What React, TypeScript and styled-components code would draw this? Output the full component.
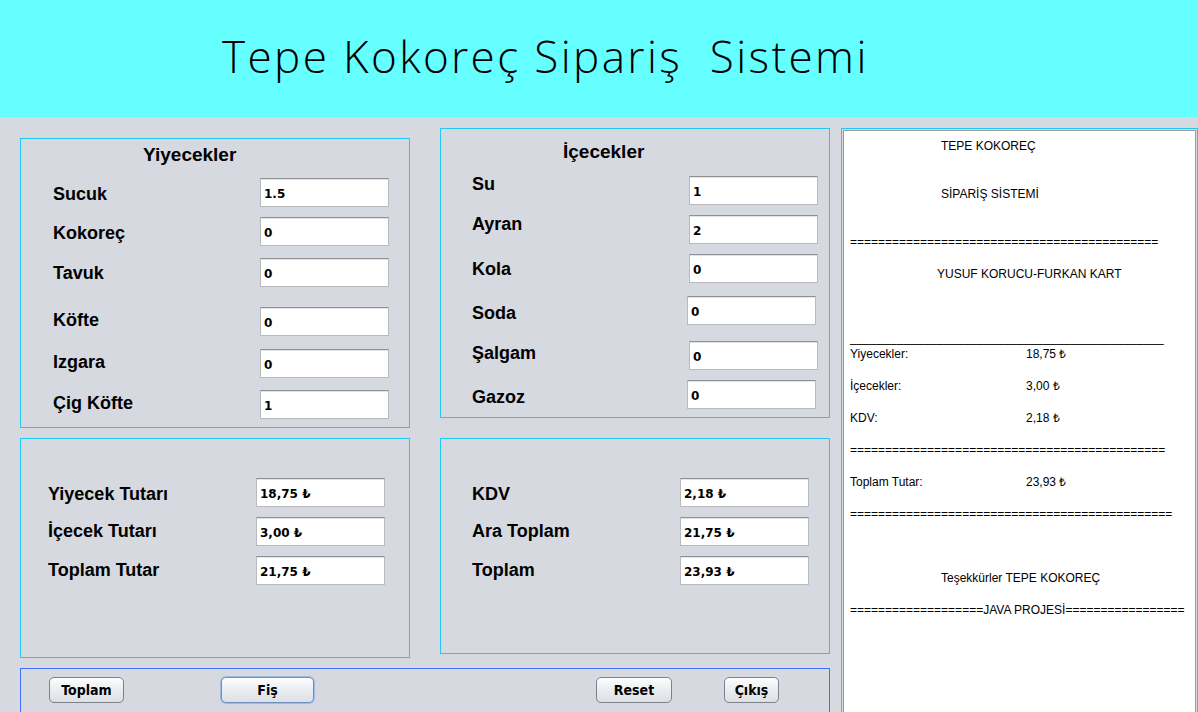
import React from "react";
import styled, { createGlobalStyle } from "styled-components";

const GlobalStyle = createGlobalStyle`
  html, body { margin: 0; padding: 0; }
  body { background: #d6d9df; }
  * { box-sizing: border-box; }
`;

const Frame = styled.div`
  width: 1198px;
  height: 712px;
  overflow: hidden;
  background: #d6d9df;
  display: flex;
  flex-direction: column;
  font-family: "Liberation Sans", Arial, sans-serif;
  color: #000;
`;

const Header = styled.header`
  flex: none;
  height: 117px;
  background: #66ffff;
  display: flex;
  align-items: center;
  padding-left: 222px;
`;

const Title = styled.h1`
  margin: 0 0 6px 0;
  font-family: "Open Sans", "Noto Sans", sans-serif;
  font-weight: 300;
  font-size: 44px;
  line-height: 1;
  white-space: pre;
  letter-spacing: 2.4px;
`;

const Body = styled.div`
  display: flex;
  align-items: flex-start;
  padding-left: 20px;
`;

const LeftArea = styled.div`
  width: 810px;
  display: flex;
  flex-direction: column;
`;

const PanelRow = styled.div<{ $mt: number }>`
  display: flex;
  align-items: flex-start;
  gap: 30px;
  margin-top: ${(p) => p.$mt}px;
`;

const Panel = styled.section<{ $mt: number; $h: number; $pt: number; $pl: number }>`
  width: 390px;
  height: ${(p) => p.$h}px;
  margin-top: ${(p) => p.$mt}px;
  border: 1px solid #1fc8f5;
  padding-top: ${(p) => p.$pt}px;
  padding-left: ${(p) => p.$pl}px;
  display: flex;
  flex-direction: column;
`;

const PanelTitle = styled.h2<{ $indent: number }>`
  margin: 0;
  padding-left: ${(p) => p.$indent}px;
  font-size: 19px;
  line-height: 22px;
  font-weight: bold;
`;

const Row = styled.div<{ $mt: number }>`
  display: flex;
  align-items: flex-start;
  margin-top: ${(p) => p.$mt}px;
  height: 29px;
`;

const Label = styled.div<{ $w: number; $dy: number }>`
  width: ${(p) => p.$w}px;
  flex: none;
  margin-top: ${(p) => p.$dy}px;
  font-size: 18px;
  line-height: 20px;
  font-weight: bold;
  white-space: nowrap;
`;

const Field = styled.input`
  width: 129px;
  height: 29px;
  flex: none;
  margin: 0;
  padding: 2px 3px 0 3px;
  border: 1px solid #b9babd;
  border-top-color: #8f9093;
  box-shadow: inset 0 1px 0 #e4e4e4;
  background: #fff;
  font-family: "DejaVu Sans", sans-serif;
  font-weight: bold;
  font-size: 12px;
  color: #000;
  outline: none;
`;

const ButtonBar = styled.div`
  margin-top: 10px;
  width: 810px;
  height: 60px;
  border: 1px solid #3f70ff;
  display: flex;
  align-items: flex-start;
  padding-top: 8px;
`;

const Btn = styled.button<{ $w: number; $ml: number; $focus?: boolean }>`
  width: ${(p) => p.$w}px;
  height: 26px;
  margin-left: ${(p) => p.$ml}px;
  padding: 0;
  border: 1px solid ${(p) => (p.$focus ? "#6f8fbf" : "#7d8188")};
  border-radius: 5px;
  background: linear-gradient(#fdfdfe 0%, #eceef1 45%, #dcdfe4 100%);
  box-shadow: ${(p) => (p.$focus ? "0 0 0 1px #9dbbe4" : "none")};
  font-family: "DejaVu Sans Condensed", "DejaVu Sans", sans-serif;
  font-stretch: condensed;
  font-weight: bold;
  font-size: 14px;
  color: #000;
`;

const Receipt = styled.aside`
  margin-left: 11px;
  margin-top: 11px;
  width: 357px;
  height: 600px;
  border: 1px solid #1fc8f5;
  padding: 1px;
  background: #d6d9df;
  display: flex;
`;

const Paper = styled.div`
  flex: 1;
  background: #fff;
  border: 1px solid #9a9b9e;
  padding: 7px 0 0 6px;
  font-family: "Liberation Sans", Arial, sans-serif;
  font-size: 12px;
  display: flex;
  flex-direction: column;
`;

const Line = styled.div<{ $skip?: number; $indent?: number }>`
  height: 16px;
  line-height: 16px;
  white-space: pre;
  margin-top: ${(p) => (p.$skip || 0) * 16}px;
  padding-left: ${(p) => p.$indent || 0}px;
`;

const PairLine = styled(Line)`
  display: grid;
  grid-template-columns: 176px auto;
`;

type RowData = { label: string; value: string; mt: number; dy: number; fx?: number };

type PanelProps = {
  title?: string;
  mt: number;
  h: number;
  pt: number;
  labelX: number;
  fieldX: number;
  rows: RowData[];
};

const FormPanel = ({ title, mt, h, pt, labelX, fieldX, rows }: PanelProps) => (
  <Panel $mt={mt} $h={h} $pt={pt} $pl={labelX - 1}>
    {title && <PanelTitle $indent={122 - (labelX - 1)}>{title}</PanelTitle>}
    {rows.map((r) => (
      <Row key={r.label} $mt={r.mt}>
        <Label $w={(r.fx ?? fieldX) - labelX} $dy={r.dy}>
          {r.label}
        </Label>
        <Field readOnly value={r.value} />
      </Row>
    ))}
  </Panel>
);

const foods: RowData[] = [
  { label: "Sucuk", value: "1.5", mt: 12, dy: 6 },
  { label: "Kokoreç", value: "0", mt: 10, dy: 6 },
  { label: "Tavuk", value: "0", mt: 12, dy: 5 },
  { label: "Köfte", value: "0", mt: 20, dy: 3 },
  { label: "Izgara", value: "0", mt: 13, dy: 3 },
  { label: "Çig Köfte", value: "1", mt: 12, dy: 3 },
];

const drinks: RowData[] = [
  { label: "Su", value: "1", mt: 13, dy: -2 },
  { label: "Ayran", value: "2", mt: 10, dy: -1 },
  { label: "Kola", value: "0", mt: 10, dy: 5 },
  { label: "Soda", value: "0", mt: 13, dy: 7, fx: 247 },
  { label: "Şalgam", value: "0", mt: 16, dy: 2, fx: 249 },
  { label: "Gazoz", value: "0", mt: 10, dy: 7, fx: 247 },
];

const totalsLeft: RowData[] = [
  { label: "Yiyecek Tutarı", value: "18,75 ₺", mt: 39, dy: 6 },
  { label: "İçecek Tutarı", value: "3,00 ₺", mt: 10, dy: 4 },
  { label: "Toplam Tutar", value: "21,75 ₺", mt: 10, dy: 4 },
];

const totalsRight: RowData[] = [
  { label: "KDV", value: "2,18 ₺", mt: 39, dy: 6 },
  { label: "Ara Toplam", value: "21,75 ₺", mt: 10, dy: 4 },
  { label: "Toplam", value: "23,93 ₺", mt: 10, dy: 4 },
];

const eq = (n: number) => "=".repeat(n);

export default function App() {
  return (
    <>
      <GlobalStyle />
      <Frame>
        <Header>
          <Title>{"Tepe Kokoreç Sipariş  Sistemi"}</Title>
        </Header>
        <Body>
          <LeftArea>
            <PanelRow $mt={0}>
              <FormPanel title="Yiyecekler" mt={21} h={290} pt={5} labelX={33} fieldX={240} rows={foods} />
              <FormPanel title="İçecekler" mt={11} h={290} pt={12} labelX={32} fieldX={249} rows={drinks} />
            </PanelRow>
            <PanelRow $mt={10}>
              <FormPanel mt={0} h={220} pt={0} labelX={28} fieldX={236} rows={totalsLeft} />
              <FormPanel mt={0} h={216} pt={0} labelX={32} fieldX={240} rows={totalsRight} />
            </PanelRow>
            <ButtonBar>
              <Btn $w={75} $ml={28}>Toplam</Btn>
              <Btn $w={93} $ml={97} $focus>Fiş</Btn>
              <Btn $w={76} $ml={282}>Reset</Btn>
              <Btn $w={55} $ml={52}>Çıkış</Btn>
            </ButtonBar>
          </LeftArea>
          <Receipt>
            <Paper>
              <Line $indent={91}>TEPE KOKOREÇ</Line>
              <Line $skip={2} $indent={91}>SİPARİŞ SİSTEMİ</Line>
              <Line $skip={2}>{eq(44)}</Line>
              <Line $skip={1} $indent={87}>YUSUF KORUCU-FURKAN KART</Line>
              <Line $skip={3}>{"_".repeat(47)}</Line>
              <PairLine>
                <span>Yiyecekler:</span>
                <span>18,75 ₺</span>
              </PairLine>
              <PairLine $skip={1}>
                <span>İçecekler:</span>
                <span>3,00 ₺</span>
              </PairLine>
              <PairLine $skip={1}>
                <span>KDV:</span>
                <span>2,18 ₺</span>
              </PairLine>
              <Line $skip={1}>{eq(45)}</Line>
              <PairLine $skip={1}>
                <span>Toplam Tutar:</span>
                <span>23,93 ₺</span>
              </PairLine>
              <Line $skip={1}>{eq(46)}</Line>
              <Line $skip={3} $indent={91}>Teşekkürler TEPE KOKOREÇ</Line>
              <Line $skip={1}>{eq(19) + "JAVA PROJESİ" + eq(17)}</Line>
            </Paper>
          </Receipt>
        </Body>
      </Frame>
    </>
  );
}
